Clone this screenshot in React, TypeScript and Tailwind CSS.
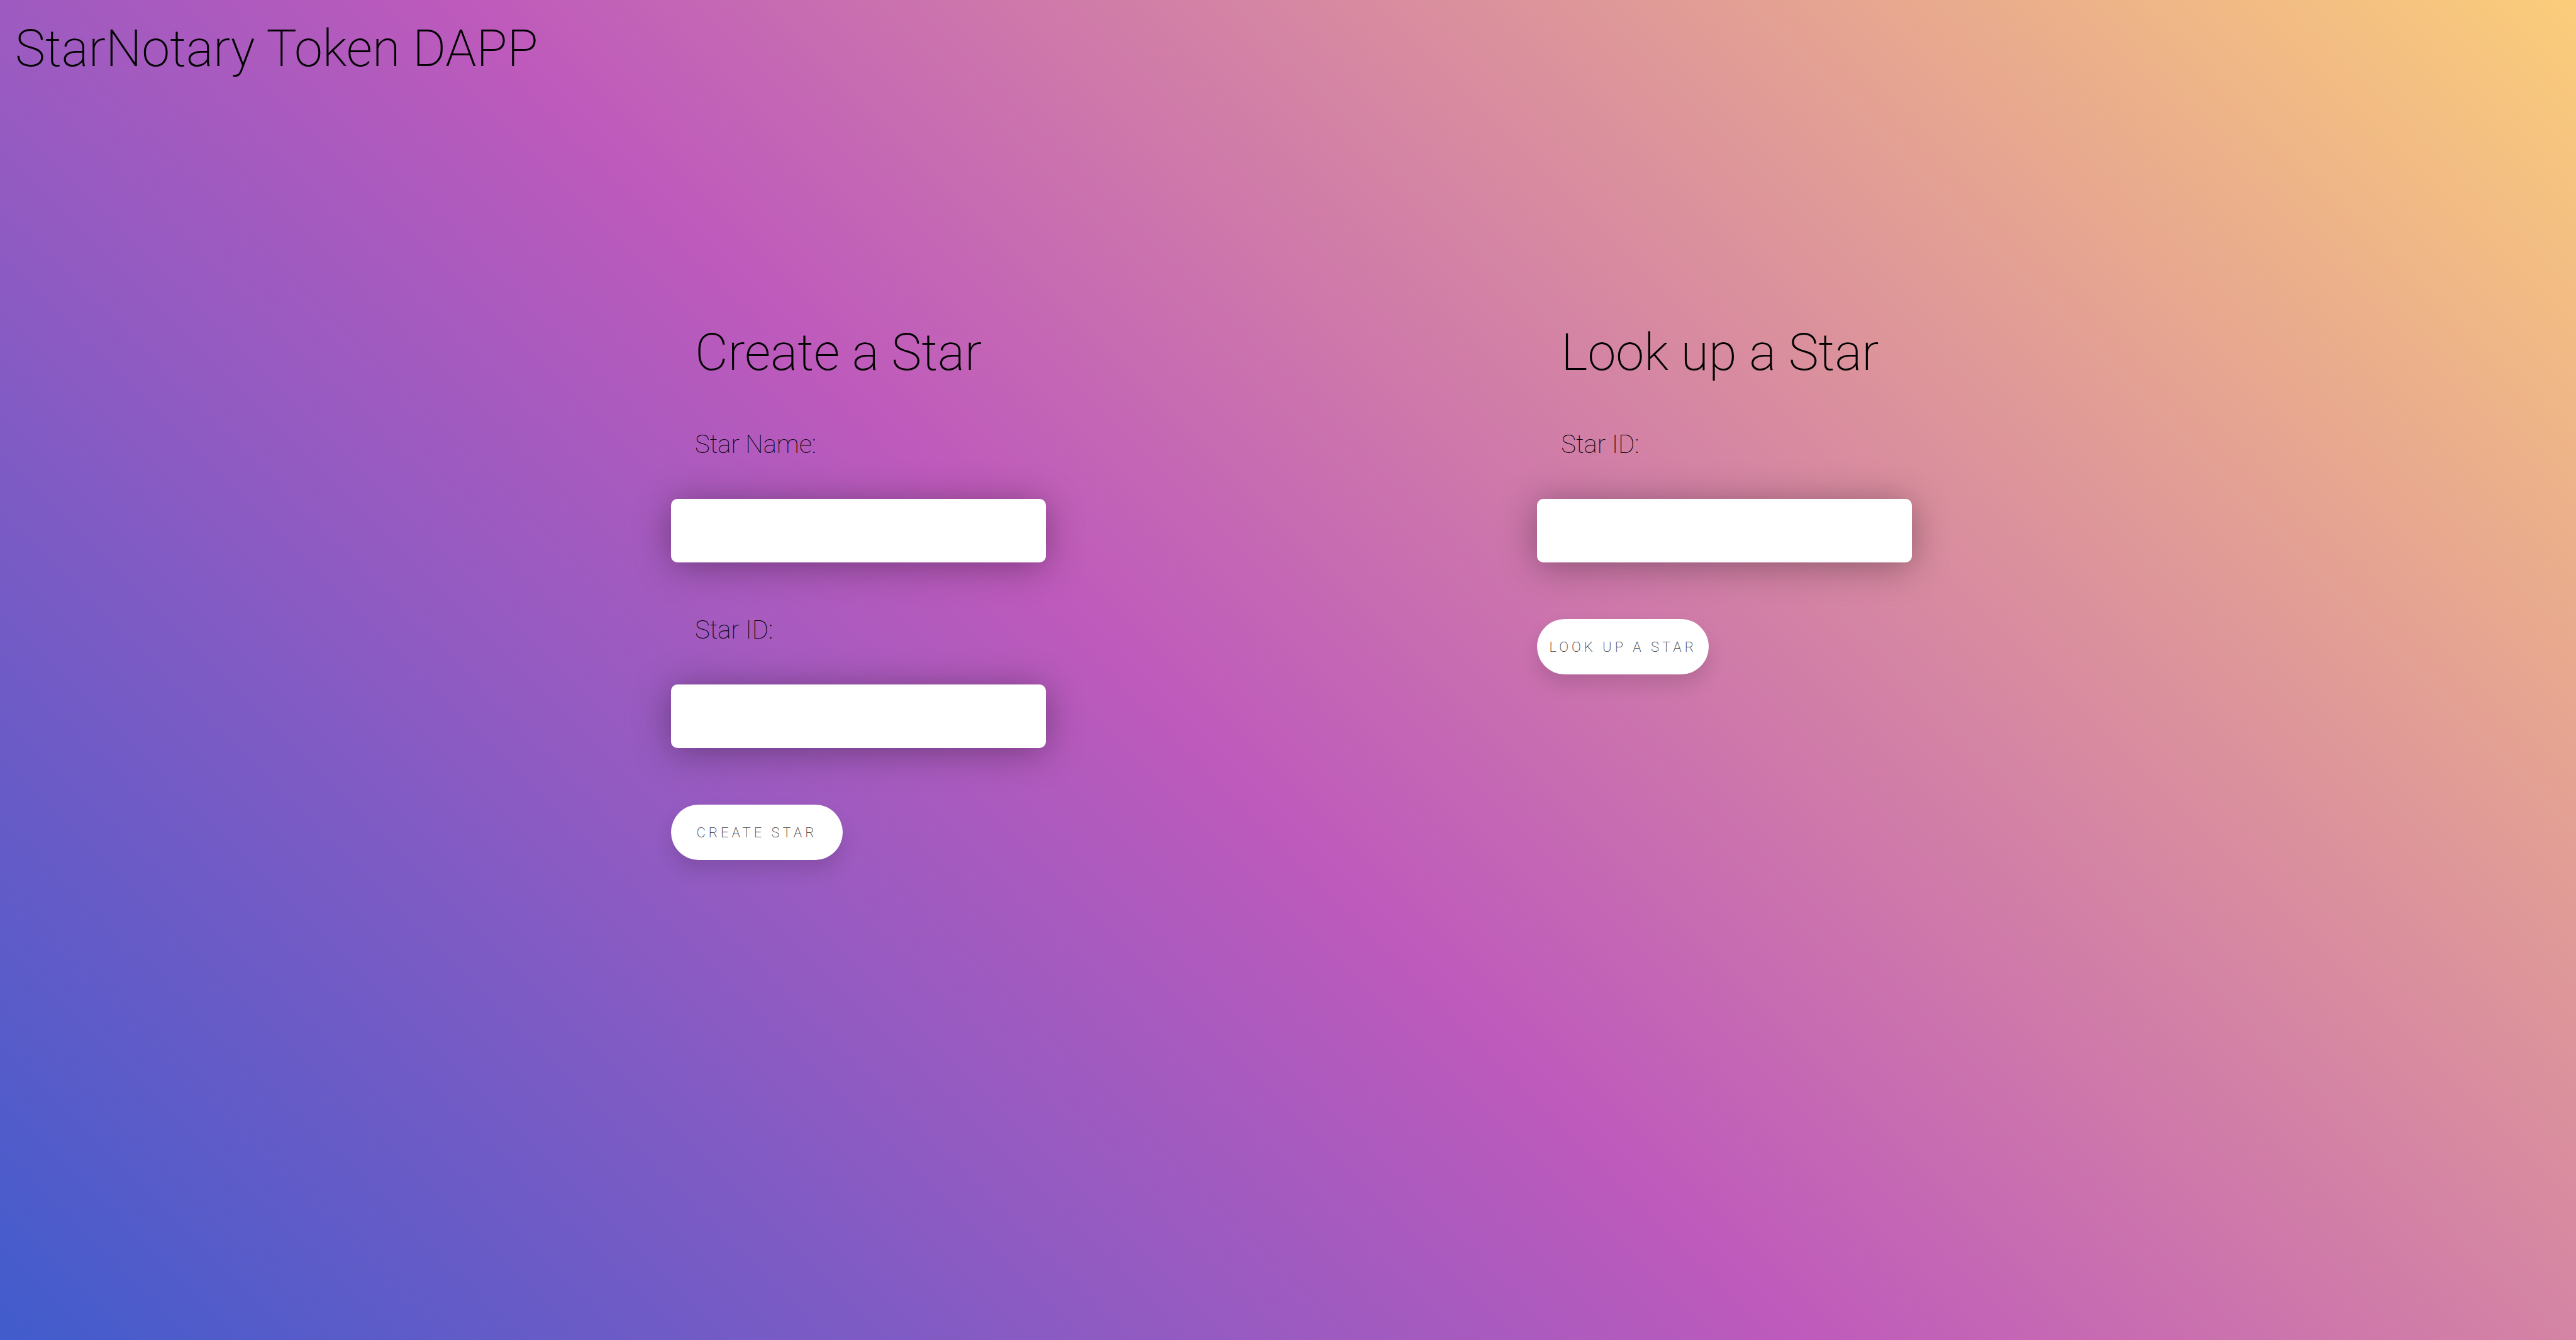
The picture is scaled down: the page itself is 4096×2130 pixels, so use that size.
import type { ReactNode } from 'react';

function Field({ id, label }: { id: string; label: string }) {
  return (
    <div className="flex flex-col items-start gap-[62px]">
      <label htmlFor={id} className="pl-[38px] text-[40px] leading-[48px]">
        {label}
      </label>
      <input
        id={id}
        type="text"
        className="h-[101px] w-[596px] rounded-[10px] border-0 bg-white px-[38px] text-[40px] shadow-[0_6px_58px_rgba(0,0,0,0.35)] outline-none"
      />
    </div>
  );
}

function StarForm({ title, action, children }: { title: string; action: string; children: ReactNode }) {
  return (
    <form className="flex flex-col items-start" onSubmit={(e) => e.preventDefault()}>
      <h2 className="mb-[74px] pl-[38px] text-[81px] leading-[96px] font-extralight">{title}</h2>
      <div className="flex flex-col gap-[84px]">{children}</div>
      <button
        type="submit"
        className="mt-[90px] h-[88px] w-[273px] cursor-pointer rounded-full bg-white text-center text-[22px] font-extralight whitespace-nowrap uppercase tracking-[5px] text-[#3c3c3c] shadow-[0_16px_30px_rgba(0,0,0,0.13)]"
      >
        {action}
      </button>
    </form>
  );
}

export default function App() {
  return (
    <div className="min-h-screen bg-[linear-gradient(45deg,#415ccc_0%,#be5abc_46%,#fbcd7a_100%)] pt-[30px] font-[Roboto,sans-serif] font-thin text-black">
      <h1 className="pl-6 text-[81px] leading-[96px] font-extralight">StarNotary Token DAPP</h1>
      <main className="mt-[387px] grid grid-cols-2 items-start pr-[6.7%] pl-[26.05%]">
        <StarForm title="Create a Star" action="Create Star">
          <Field id="create-name" label="Star Name:" />
          <Field id="create-id" label="Star ID:" />
        </StarForm>
        <StarForm title="Look up a Star" action="Look up a Star">
          <Field id="lookup-id" label="Star ID:" />
        </StarForm>
      </main>
    </div>
  );
}
